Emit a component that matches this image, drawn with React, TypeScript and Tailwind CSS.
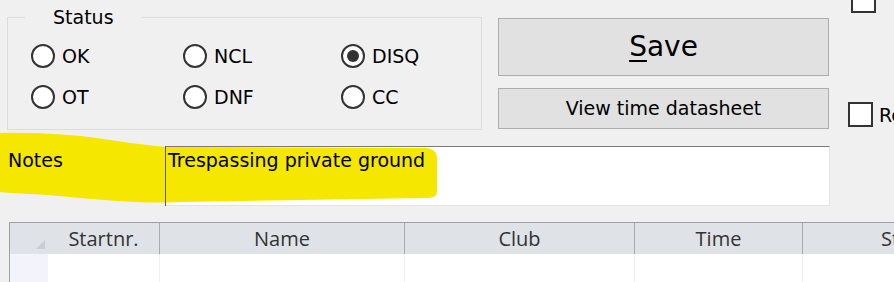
import React from 'react';

const font = { fontFamily: '"DejaVu Sans", sans-serif' };

function Radio({ label, checked }: { label: string; checked?: boolean }) {
  return (
    <div className="flex items-center gap-[7px] h-[24px]">
      <span className="w-[24px] h-[24px] rounded-full border-2 border-[#333] bg-white flex items-center justify-center">
        {checked && <span className="w-[12px] h-[12px] rounded-full bg-[#333]" />}
      </span>
      <span className="text-[19px] leading-[24px] text-black">{label}</span>
    </div>
  );
}

function Checkbox({ label, className }: { label?: string; className?: string }) {
  return (
    <div className={'flex items-center gap-[6px] whitespace-nowrap ' + (className || '')}>
      <span className="w-[25px] h-[25px] border-2 border-[#333] bg-white shrink-0" />
      {label && <span className="text-[19px] leading-[24px] text-black">{label}</span>}
    </div>
  );
}

const columns = [
  { name: 'Startnr.', w: 'w-[111px]' },
  { name: 'Name', w: 'w-[245px]' },
  { name: 'Club', w: 'w-[230px]' },
  { name: 'Time', w: 'w-[168px]' },
  { name: 'Status', w: 'w-[215px]' },
];

export default function App() {
  return (
    <div className="w-[894px] h-[282px] bg-[#f0f0f0] overflow-hidden relative" style={font}>
      <div className="flex h-[130px]">
        <fieldset className="ml-[7px] mt-[5px] w-[476px] h-[125px] border border-[#dcdcdc] pl-[23px]">
          <legend className="ml-[-6px] px-[28px] text-[19px] leading-[24px] text-black">Status</legend>
          <div className="grid grid-cols-[152px_158px_140px] gap-y-[17px] pt-[15px]">
            <Radio label="OK" />
            <Radio label="NCL" />
            <Radio label="DISQ" checked />
            <Radio label="OT" />
            <Radio label="DNF" />
            <Radio label="CC" />
          </div>
        </fieldset>
        <div className="ml-[16px] mt-[18px] flex flex-col gap-[12px]">
          <button className="w-[331px] h-[58px] bg-[#e1e1e1] border border-[#adadad] text-[28px] text-black">
            <span className="underline underline-offset-[4px] decoration-[2px]">S</span>ave
          </button>
          <button className="w-[331px] h-[41px] bg-[#e1e1e1] border border-[#adadad] text-[19px] text-black">
            View time datasheet
          </button>
        </div>
        <div className="ml-[19px] flex flex-col">
          <Checkbox className="mt-[-12px] ml-[3px]" />
          <Checkbox className="mt-[89px]" label="Re-enter" />
        </div>
      </div>

      <div className="flex items-start mt-[16px] relative">
        <span className="relative z-10 ml-[8px] w-[157px] mt-[2px] text-[19px] leading-[24px] text-black">Notes</span>
        <div className="relative w-[665px] h-[60px] bg-white border border-[#e3e3e3] border-t-[#7a7a7a] pl-[2px] pt-[1px] text-[19px] leading-[24px] text-black">
          <span className="absolute left-[-1px] top-[-1px] bottom-[-1px] w-px bg-[#5a5a5a] z-10" />
          <span className="relative z-10">Trespassing private ground</span>
        </div>
        <svg className="absolute left-0 top-[-14px] pointer-events-none" width="450" height="80" viewBox="0 0 450 80">
          <path
            d="M0 1 C40 0 80 3 110 8 C135 12 150 13 165 15 L425 16 C433 16 437 20 437 27 L437 60 C437 65 432 66 424 66 L180 70 C140 72 110 68 80 66 C45 62 20 62 0 60 Z"
            fill="#f5e700"
          />
        </svg>
      </div>

      <div className="ml-[9px] mt-[16px] border-l border-t border-[#a0a0a0]" style={{ fontFamily: '"Open Sans", sans-serif' }}>
        <div className="flex h-[31px] bg-[#dfe3e8]">
          <div className="w-[38px] shrink-0 relative">
            <svg className="absolute left-[26px] top-[17px]" width="9" height="9" viewBox="0 0 9 9">
              <path d="M9 0 L9 9 L0 9 Z" fill="#c9ced6" />
            </svg>
          </div>
          {columns.map((c, i) => (
            <div
              key={c.name}
              className={c.w + ' shrink-0 flex items-center justify-center text-[20px] text-[#333] ' + (i > 0 ? 'border-l border-[#a8acb2]' : '')}
            >
              {c.name}
            </div>
          ))}
        </div>
        <div className="flex h-[30px] bg-white">
          <div className="w-[38px] shrink-0 bg-[#f3f3fb]" />
          {columns.map((c, i) => (
            <div key={c.name} className={c.w + ' shrink-0 ' + (i > 0 ? 'border-l border-[#f0f0f0]' : '')} />
          ))}
        </div>
      </div>
    </div>
  );
}
